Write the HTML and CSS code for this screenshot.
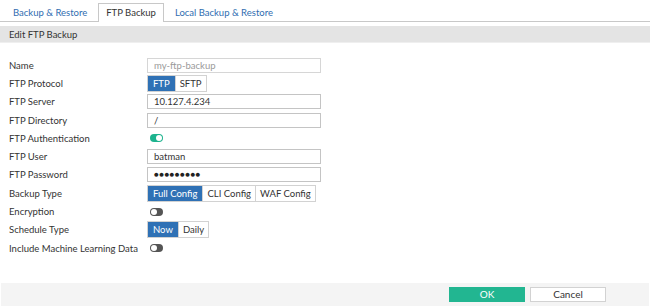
FILE: index.html
```html
<!DOCTYPE html>
<html>
<head>
<meta charset="utf-8">
<link rel="stylesheet" href="styles.css">
</head>
<body>
<div class="page">
  <div class="tabs">
    <div class="tab">Backup &amp; Restore</div>
    <div class="tab active">FTP Backup</div>
    <div class="tab">Local Backup &amp; Restore</div>
  </div>
  <div class="section-head">Edit FTP Backup</div>
  <div class="form">
    <div class="row"><div class="label">Name</div><div class="field"><div class="input placeholder">my-ftp-backup</div></div></div>
    <div class="row"><div class="label">FTP Protocol</div><div class="field"><div class="seg"><span class="opt on">FTP</span><span class="opt">SFTP</span></div></div></div>
    <div class="row"><div class="label">FTP Server</div><div class="field"><div class="input">10.127.4.234</div></div></div>
    <div class="row"><div class="label">FTP Directory</div><div class="field"><div class="input">/</div></div></div>
    <div class="row"><div class="label">FTP Authentication</div><div class="field"><span class="toggle on"></span></div></div>
    <div class="row"><div class="label">FTP User</div><div class="field"><div class="input">batman</div></div></div>
    <div class="row"><div class="label">FTP Password</div><div class="field"><div class="input dots">●●●●●●●●●</div></div></div>
    <div class="row"><div class="label">Backup Type</div><div class="field"><div class="seg"><span class="opt on">Full Config</span><span class="opt">CLI Config</span><span class="opt">WAF Config</span></div></div></div>
    <div class="row"><div class="label">Encryption</div><div class="field"><span class="toggle"></span></div></div>
    <div class="row"><div class="label">Schedule Type</div><div class="field"><div class="seg"><span class="opt on">Now</span><span class="opt">Daily</span></div></div></div>
    <div class="row"><div class="label">Include Machine Learning Data</div><div class="field"><span class="toggle"></span></div></div>
  </div>
  <div class="footer">
    <button class="btn ok">OK</button>
    <button class="btn cancel">Cancel</button>
  </div>
</div>
</body>
</html>
```
FILE: styles.css
```css
* { box-sizing: border-box; }
html, body { margin: 0; padding: 0; background: #fff; }
body {
  font-family: Lato, "Liberation Sans", sans-serif;
  font-size: 9.5px;
  color: #333;
  width: 650px;
  height: 308px;
  overflow: hidden;
}
.page { display: flex; flex-direction: column; height: 308px; }
.tabs {
  display: flex;
  padding: 3px 0 0 5px;
  border-bottom: 1px solid #c8c8c8;
  height: 22px;
}
.tab {
  padding: 0 7px;
  line-height: 18px;
  color: #2f6db0;
  margin-right: 3px;
  border: 1px solid transparent;
  border-bottom: none;
}
.tab.active {
  color: #333;
  background: #fff;
  border-color: #c8c8c8;
  height: 19px;
  margin-bottom: -1px;
}
.section-head {
  margin-top: 4px;
  background: #e4e4e4;
  height: 17px;
  line-height: 17px;
  padding-left: 9px;
  border-bottom: 1px solid #efefef;
}
.form {
  padding-top: 13px;
  display: flex;
  flex-direction: column;
}
.row {
  display: flex;
  align-items: center;
  height: 18.3px;
}
.label { width: 147px; padding-left: 9px; white-space: nowrap; }
.field { flex: 1; display: flex; align-items: center; }
.input {
  width: 174px;
  height: 15px;
  border: 1px solid #c4c4c4;
  padding-left: 6px;
  line-height: 13px;
  color: #333;
}
.input.placeholder { color: #9a9a9a; border-color: #d6d6d6; }
.input.dots { font-size: 8px; letter-spacing: 0.4px; line-height: 13px; color: #222; }
.seg { display: flex; border: 1px solid #d2d2d2; height: 17px; }
.opt {
  padding: 0 4px;
  line-height: 15px;
  color: #333;
  background: #fff;
  border-left: 1px solid #d2d2d2;
}
.opt:first-child { border-left: none; }
.opt.on { background: #2f71b5; color: #fff; padding: 0 5px; }
.toggle {
  display: inline-block;
  width: 13px;
  height: 8px;
  border-radius: 4px;
  margin-left: 3px;
  background: #555;
  position: relative;
}
.toggle::after {
  content: "";
  position: absolute;
  top: 1px;
  left: 1px;
  width: 6px;
  height: 6px;
  border-radius: 50%;
  background: #fff;
}
.toggle.on { background: #1db38e; }
.toggle.on::after { left: 6px; }
.footer {
  margin: auto 1px 2px 1px;
  height: 23px;
  background: #f4f4f4;
  display: flex;
  align-items: center;
  justify-content: flex-end;
  padding-right: 43px;
  gap: 5px;
}
.btn {
  width: 76px;
  height: 15px;
  font-family: Lato, "Liberation Sans", sans-serif;
  font-size: 10px;
  line-height: 13px;
  padding: 0;
  border: 1px solid #d2d2d2;
  background: #fff;
  color: #333;
}
.btn.ok { background: #22b691; border-color: #22b691; color: #fff; }
```
